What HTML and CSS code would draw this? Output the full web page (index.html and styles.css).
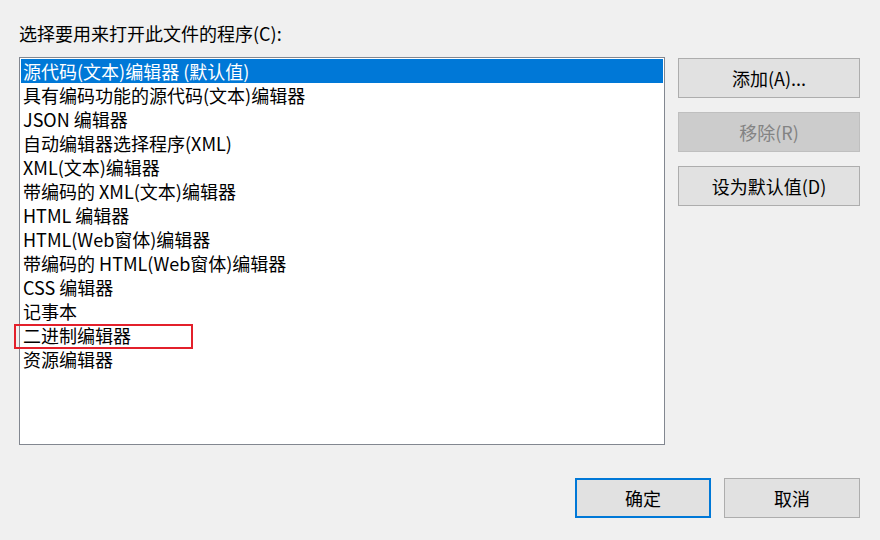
FILE: index.html
```html
<!DOCTYPE html>
<html lang="zh-CN">
<head>
<meta charset="utf-8">
<link rel="stylesheet" href="styles.css">
</head>
<body>
<div class="dialog">
  <div class="label">选择要用来打开此文件的程序(C):</div>
  <div class="main">
    <ul class="list">
      <li class="item selected">源代码(文本)编辑器 (默认值)</li>
      <li class="item">具有编码功能的源代码(文本)编辑器</li>
      <li class="item">JSON 编辑器</li>
      <li class="item">自动编辑器选择程序(XML)</li>
      <li class="item">XML(文本)编辑器</li>
      <li class="item">带编码的 XML(文本)编辑器</li>
      <li class="item">HTML 编辑器</li>
      <li class="item">HTML(Web窗体)编辑器</li>
      <li class="item">带编码的 HTML(Web窗体)编辑器</li>
      <li class="item">CSS 编辑器</li>
      <li class="item">记事本</li>
      <li class="item marked">二进制编辑器<span class="mark"></span></li>
      <li class="item">资源编辑器</li>
    </ul>
    <div class="side">
      <button class="btn side-btn">添加(A)...</button>
      <button class="btn side-btn" disabled>移除(R)</button>
      <button class="btn side-btn">设为默认值(D)</button>
    </div>
  </div>
  <div class="footer">
    <button class="btn foot-btn primary">确定</button>
    <button class="btn foot-btn">取消</button>
  </div>
</div>
</body>
</html>
```
FILE: styles.css
```css
html, body {
  margin: 0;
  padding: 0;
  background: #f0f0f0;
}
body {
  font-family: "Noto Sans CJK SC", "Noto Sans", sans-serif;
  font-size: 18px;
  color: #000;
}
.dialog {
  width: 880px;
  height: 540px;
  box-sizing: border-box;
  padding: 21px 20px 0 19px;
}
.label {
  height: 24px;
  line-height: 24px;
  margin-bottom: 12px;
}
.main {
  display: flex;
  align-items: flex-start;
}
.list {
  list-style: none;
  margin: 0;
  width: 646px;
  height: 388px;
  box-sizing: border-box;
  border: 1px solid #828790;
  background: #fff;
  padding: 1px;
}
.item {
  height: 24px;
  line-height: 24px;
  padding-left: 2px;
  white-space: nowrap;
}
.item.selected {
  background: #0078d7;
  color: #fff;
}
.item.marked {
  position: relative;
}
.mark {
  position: absolute;
  left: -7px;
  top: 1px;
  width: 179px;
  height: 25px;
  box-sizing: border-box;
  border: 2px solid #e3202b;
}
.side {
  display: flex;
  flex-direction: column;
  gap: 14px;
  margin-left: 13px;
  margin-top: 1px;
}
.btn {
  font-family: inherit;
  font-size: 18px;
  color: #000;
  background: #e1e1e1;
  border: 1px solid #adadad;
  box-sizing: border-box;
  height: 40px;
  padding: 0;
  margin: 0;
}
.side-btn {
  width: 182px;
}
.btn:disabled {
  background: #cccccc;
  border-color: #bfbfbf;
  color: #838383;
}
.footer {
  display: flex;
  justify-content: flex-end;
  gap: 13px;
  margin-top: 33px;
}
.foot-btn {
  width: 136px;
}
.primary {
  border: 2px solid #0078d7;
}
```
